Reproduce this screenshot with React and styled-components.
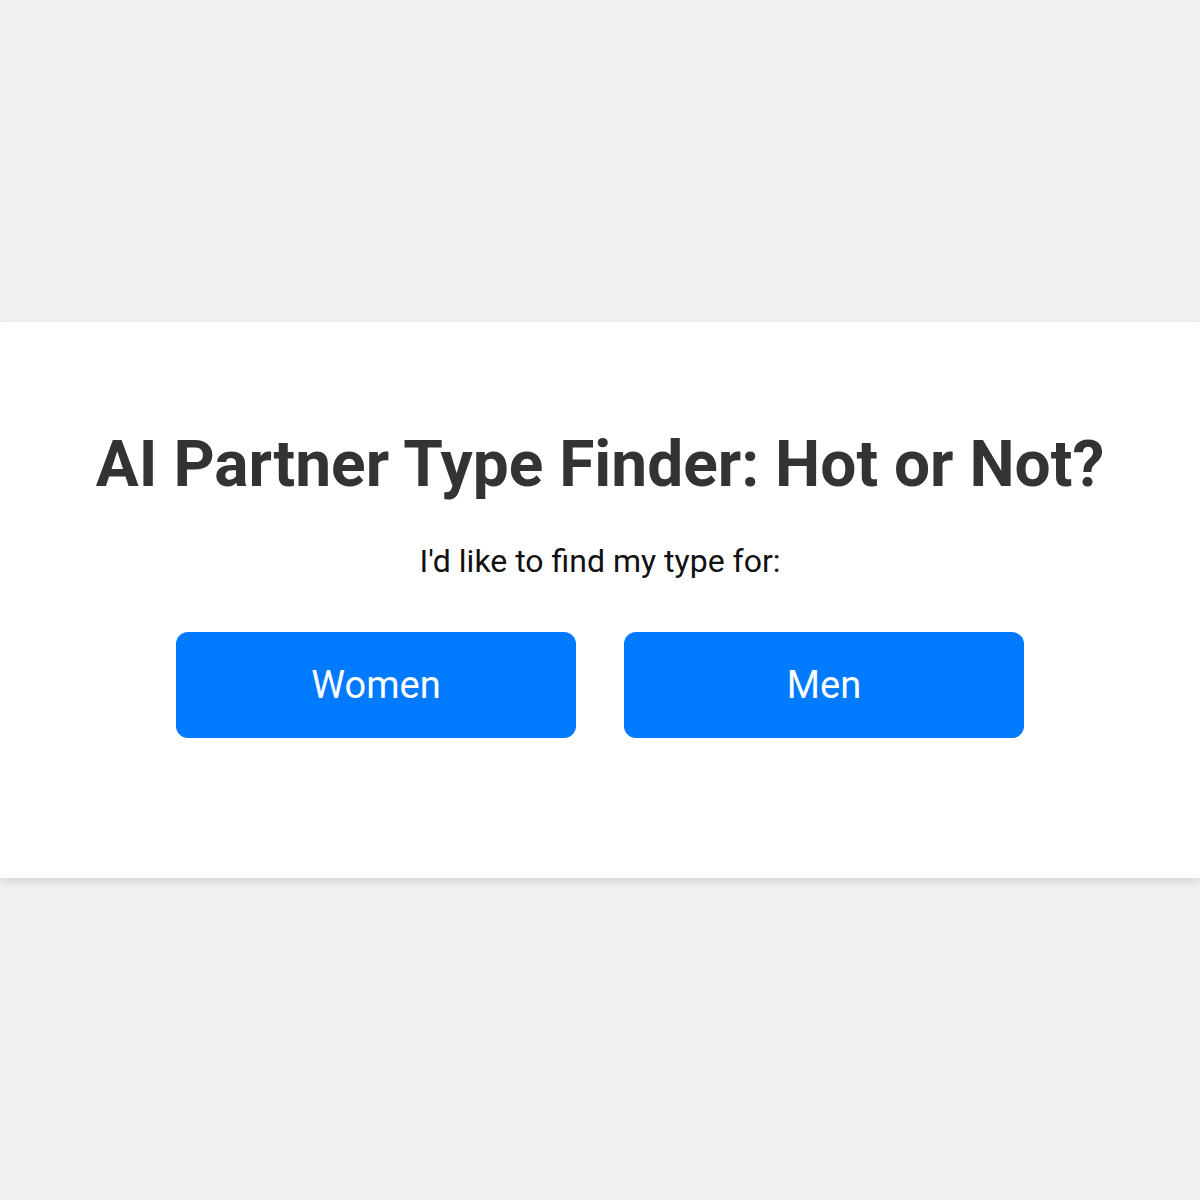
import React from "react";
import styled, { createGlobalStyle } from "styled-components";

const GlobalStyle = createGlobalStyle`
  html, body {
    margin: 0;
    padding: 0;
    background: #f0f0f0;
    font-family: Roboto, "Liberation Sans", Arial, sans-serif;
  }
`;

const Page = styled.div`
  min-height: 1200px;
  display: flex;
  align-items: center;
`;

const Card = styled.div`
  width: 100%;
  background: #fff;
  box-shadow: 0 4px 8px rgba(0, 0, 0, 0.1);
  padding: 105px 0 140px;
  display: flex;
  flex-direction: column;
  align-items: center;
  text-align: center;
`;

const Title = styled.h1`
  margin: 0;
  font-size: 64px;
  line-height: 1.2;
  font-weight: 700;
  color: #333;
`;

const Prompt = styled.p`
  margin: 38px 0 0;
  font-size: 32px;
  line-height: 1.2;
  color: #111;
`;

const Choices = styled.div`
  margin-top: 52px;
  display: flex;
  gap: 48px;
`;

const Choice = styled.button`
  width: 400px;
  height: 106px;
  border: none;
  border-radius: 12px;
  background: #007bff;
  color: #fff;
  font-family: inherit;
  font-size: 38px;
  cursor: pointer;
  display: flex;
  align-items: center;
  justify-content: center;
`;

export default function App() {
  return (
    <>
      <GlobalStyle />
      <Page>
        <Card>
          <Title>AI Partner Type Finder: Hot or Not?</Title>
          <Prompt>I'd like to find my type for:</Prompt>
          <Choices>
            <Choice>Women</Choice>
            <Choice>Men</Choice>
          </Choices>
        </Card>
      </Page>
    </>
  );
}
